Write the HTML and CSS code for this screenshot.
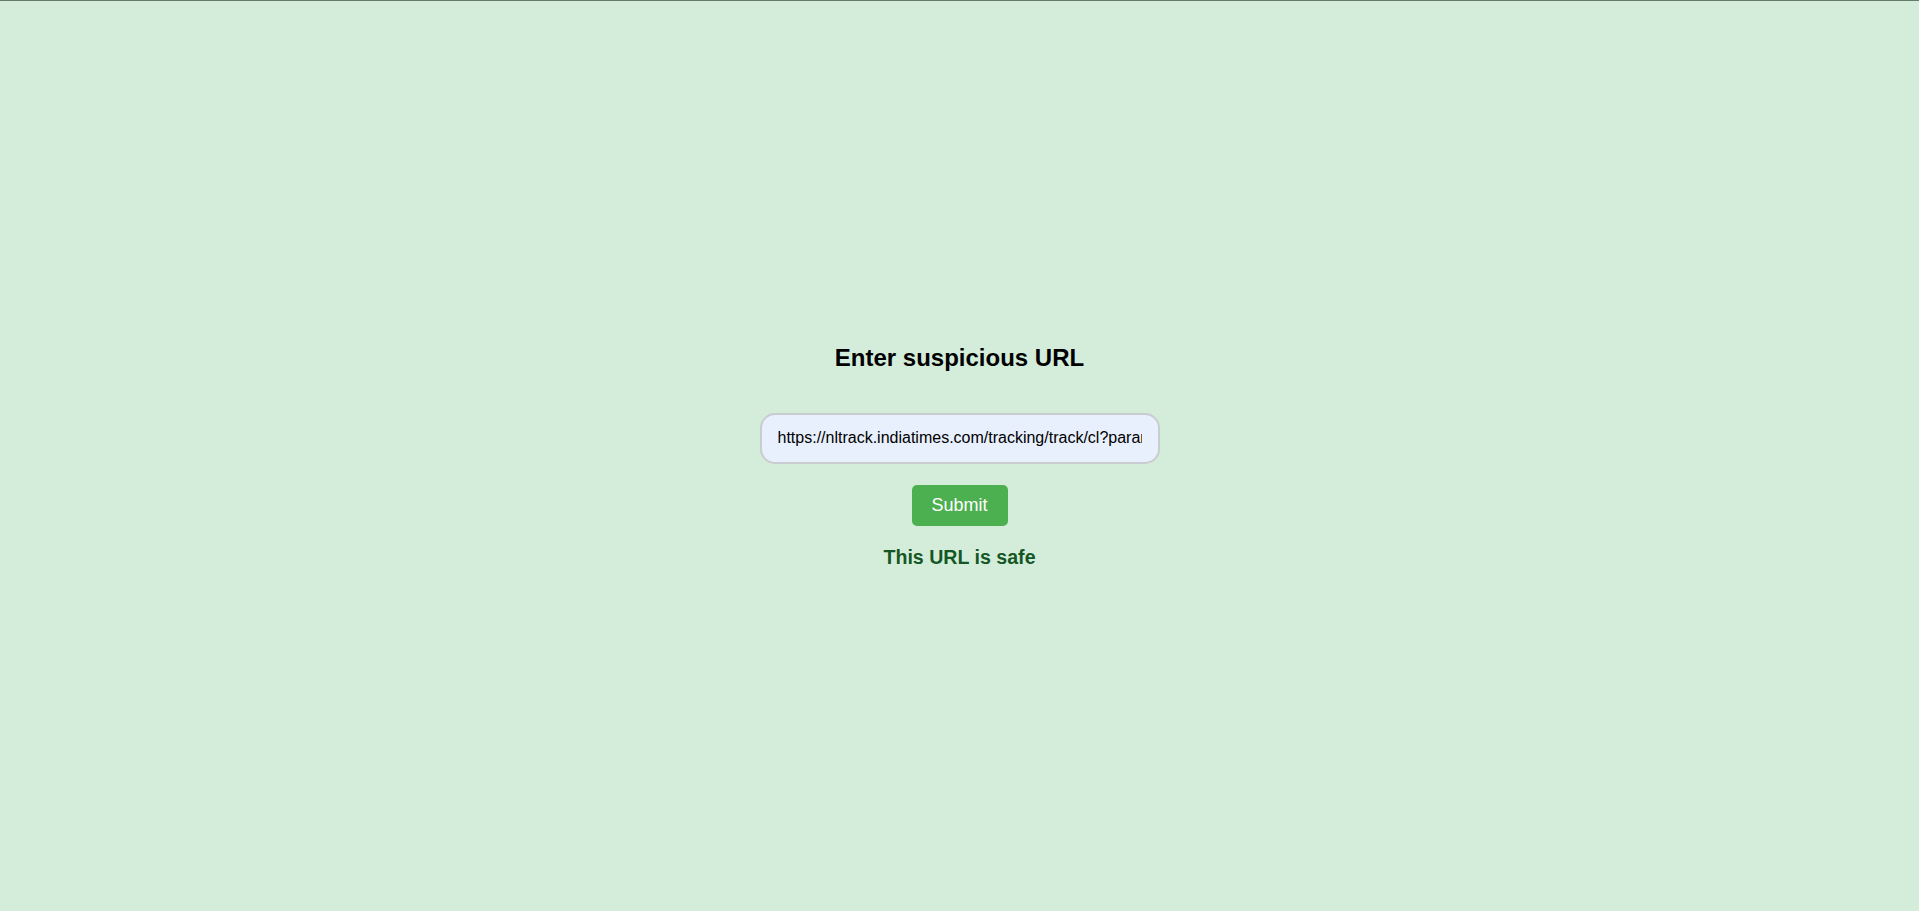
FILE: index.html
```html
<!DOCTYPE html>
<html lang="en">
<head>
<meta charset="utf-8">
<title>URL Checker</title>
<link rel="stylesheet" href="styles.css">
</head>
<body>
<div class="page">
  <h2 class="title">Enter suspicious URL</h2>
  <form class="form" onsubmit="return false;">
    <input class="url-input" type="text" value="https://nltrack.indiatimes.com/tracking/track/cl?param=aHR0cHM6Ly93d3cuaW5kaWF0aW1lcy5jb20vbmV3cw">
    <button class="submit" type="submit">Submit</button>
  </form>
  <p class="result">This URL is safe</p>
</div>
</body>
</html>
```
FILE: styles.css
```css
html, body {
  margin: 0;
  padding: 0;
}
body {
  background: #d4edda;
  font-family: "Liberation Sans", Arial, sans-serif;
}
.page {
  box-sizing: border-box;
  min-height: 911px;
  border-top: 1px solid #647a6a;
  display: flex;
  flex-direction: column;
  align-items: center;
  justify-content: center;
}
.title {
  margin: 0 0 41px;
  font-size: 24px;
  font-weight: bold;
  color: #000;
}
.form {
  display: flex;
  flex-direction: column;
  align-items: center;
  gap: 21px;
}
.url-input {
  box-sizing: border-box;
  width: 400px;
  height: 51px;
  padding: 0 16px;
  border: 2px solid #c9cdd0;
  border-radius: 15px;
  background: #e8f0fe;
  font-family: "Liberation Sans", Arial, sans-serif;
  font-size: 16px;
  color: #000;
  outline: none;
}
.submit {
  width: 96px;
  height: 41px;
  padding: 0;
  border: none;
  border-radius: 5px;
  background: #4caf50;
  color: #fff;
  font-family: "Liberation Sans", Arial, sans-serif;
  font-size: 18px;
  cursor: pointer;
}
.result {
  margin: 20px 0 0;
  font-size: 19.6px;
  font-weight: bold;
  color: #155724;
}
```
